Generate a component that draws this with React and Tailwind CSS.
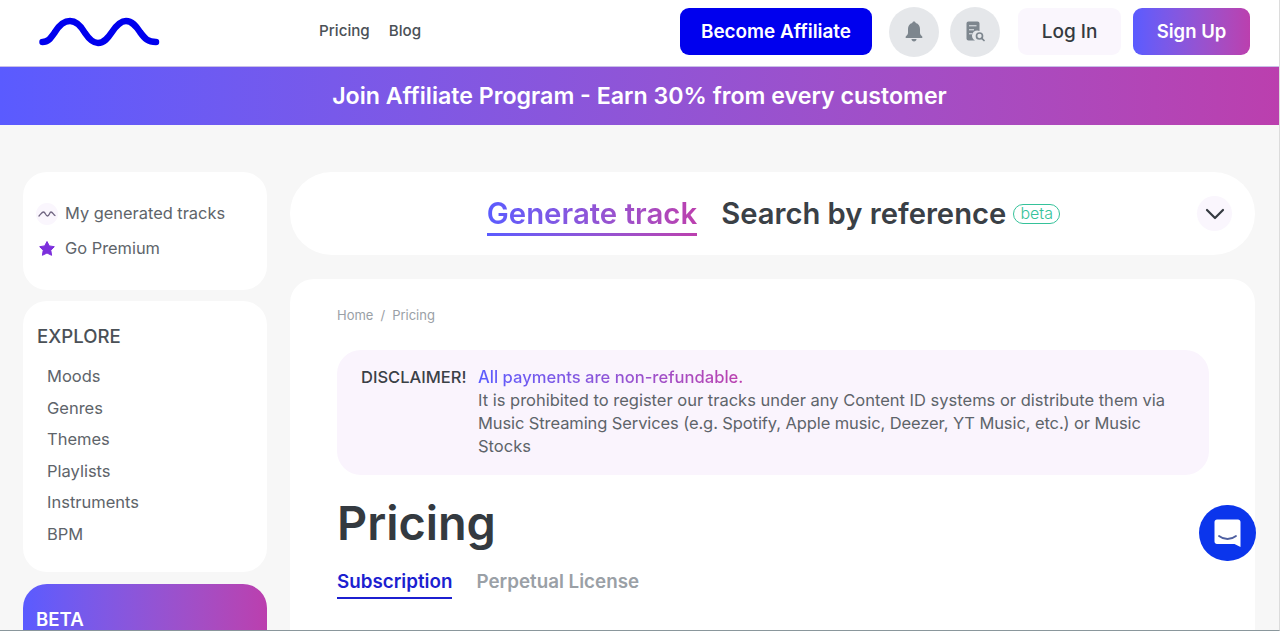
import React from "react";

const GRAD = "bg-gradient-to-r from-[#5a5bff] to-[#bb3fae]";

function Logo() {
  return (
    <svg width="122" height="32" viewBox="0 0 122 32" fill="none" className="block">
      <path d="M4.500 26 C 10 26 12 23 17 16 C 22 8 27 5 32 5 C 38 5 43 10 47 17 C 51 23 55 27 60 27 C 66 27 70 22 74 16 C 78 10 83 5 88 5 C 94 5 98 10 102 16 C 107 23 110 26 118 26" stroke="#0000ee" strokeWidth="6.500" strokeLinecap="round" />
    </svg>
  );
}

function Bell() {
  return (
    <svg width="18" height="21" viewBox="0 0 18 21" fill="#7d868e">
      <path d="M9 0.5c1 0 1.7.7 1.7 1.6 2.9.7 4.3 3 4.3 6v3.6c0 1.4.9 2.4 2.2 3.7.5.6.2 1.6-.7 1.6H1.5c-.9 0-1.2-1-.7-1.6C2.100 14.100 3 13.100 3 11.700V8.100c0-3 1.400-5.300 4.300-6C7.300 1.200 8 .5 9 .5z" />
      <path d="M6.500 18h5c0 1.500-1.100 2.500-2.500 2.500S6.500 19.500 6.500 18z" />
    </svg>
  );
}

function DocSearch() {
  return (
    <svg width="19" height="21" viewBox="0 0 19 21" fill="none">
      <path d="M2.500 0.500h9c1.100 0 2 .9 2 2v7.500a5 5 0 0 0-4.500 9.500H2.500c-1.100 0-2-.9-2-2v-15c0-1.100.9-2 2-2z" fill="#7d868e" />
      <rect x="3" y="4" width="7.500" height="1.400" fill="#c9ced3" />
      <rect x="3" y="8" width="5" height="1.400" fill="#c9ced3" />
      <rect x="3" y="12" width="3.500" height="1.400" fill="#c9ced3" />
      <circle cx="13.500" cy="15" r="3" stroke="#7d868e" strokeWidth="1.700" />
      <path d="M15.800 17.300L18 19.500" stroke="#7d868e" strokeWidth="1.700" strokeLinecap="round" />
    </svg>
  );
}

function Header() {
  return (
    <header className="h-[66px] bg-white flex items-center pl-[38px] pr-[29px] pb-[3px]">
      <div className="w-[281px] shrink-0"><Logo /></div>
      <nav className="flex gap-[19px] text-[15.200px] font-medium text-[#4b5157]">
        <span>Pricing</span>
        <span>Blog</span>
      </nav>
      <div className="ml-auto flex items-center">
        <button className="w-[192px] h-[47px] pt-[1px] rounded-[9px] bg-[#0000ee] text-white text-[18.900px] font-semibold">Become Affiliate</button>
        <div className="ml-[17px] w-[50px] h-[50px] rounded-full bg-[#e5e7ea] flex items-center justify-center"><Bell /></div>
        <div className="ml-[11px] w-[50px] h-[50px] rounded-full bg-[#e5e7ea] flex items-center justify-center"><DocSearch /></div>
        <button className="ml-[18px] w-[103px] h-[47px] pt-[1px] rounded-[9px] bg-[#faf6fd] text-[#343a40] text-[19px] font-medium">Log In</button>
        <button className={`ml-[12px] w-[117px] h-[47px] rounded-[9px] ${GRAD} text-white text-[18.500px] font-semibold`}>Sign Up</button>
      </div>
    </header>
  );
}

function Sidebar() {
  const items = ["Moods", "Genres", "Themes", "Playlists", "Instruments", "BPM"];
  return (
    <aside className="w-[244px] shrink-0 flex flex-col">
      <div className="h-[118px] bg-white rounded-[24px] pl-[13px] pt-[24px] text-[16.400px] text-[#5e646a]">
        <div className="flex items-center h-[35px]">
          <span className="w-[22px] h-[22px] rounded-full bg-[#faf6fd] flex items-center justify-center mr-[7px]">
            <svg width="18" height="8" viewBox="0 0 18 8" fill="none"><path d="M1 6 C3 4 4 2 5.500 2 C7.500 2 7.500 6 9.500 6 C11.500 6 11.500 2 13 2 C14.500 2 15.500 4.500 17 5.500" stroke="#6f6580" strokeWidth="1.300" strokeLinecap="round" /></svg>
          </span>
          My generated tracks
        </div>
        <div className="flex items-center h-[35px]">
          <span className="w-[22px] h-[22px] flex items-center justify-center mr-[7px]">
            <svg width="16" height="15" viewBox="0 0 16 15"><path d="M8 .5l2.300 4.400 5 .8-3.500 3.600.8 5L8 12l-4.600 2.300.8-5L.7 5.700l5-.8z" fill="#7c2fdc" stroke="#7c2fdc" strokeLinejoin="round" /></svg>
          </span>
          Go Premium
        </div>
      </div>
      <div className="mt-[11px] h-[271px] bg-white rounded-[24px] pl-[14px] pt-[22px]">
        <div className="text-[18.600px] font-medium text-[#4b5157] leading-[26px]">EXPLORE</div>
        <ul className="mt-[12px] pl-[10px] text-[16.500px] text-[#5e646a]">
          {items.map((t) => (
            <li key={t} className="h-[31.500px] leading-[31.500px]">{t}</li>
          ))}
        </ul>
      </div>
      <div className={`mt-[12px] h-[120px] rounded-[24px] ${GRAD} pl-[13px] pt-[22px] text-white text-[18.600px] font-semibold leading-[26px]`}>BETA</div>
    </aside>
  );
}

function TopCard() {
  return (
    <div className="h-[83px] bg-white rounded-[42px] flex items-center relative justify-center pl-[2px]">
      <div className="flex items-center">
        <span className="relative">
          <span className={`${GRAD} bg-clip-text text-transparent text-[29.400px] font-semibold leading-[40px] block`}>Generate track</span>
          <span className={`absolute left-0 right-0 bottom-[-2px] h-[3px] ${GRAD}`}></span>
        </span>
        <span className="ml-[24px] text-[29.200px] font-semibold text-[#3a4046] leading-[40px]">Search by reference</span>
        <span className="ml-[7px] mt-[1px] h-[20px] w-[47px] rounded-full border border-[#35c29a] text-[#35c29a] text-[16px] font-light leading-[17px] flex justify-center">beta</span>
      </div>
      <span className="absolute right-[23px] top-[24px] w-[35px] h-[35px] rounded-full bg-[#faf6fd] flex items-center justify-center">
        <svg width="20" height="12" viewBox="0 0 20 12" fill="none"><path d="M2 2l8 8 8-8" stroke="#343a40" strokeWidth="2.200" strokeLinecap="round" strokeLinejoin="round" /></svg>
      </span>
    </div>
  );
}

function Content() {
  return (
    <div className="mt-[24px] bg-white rounded-t-[24px] h-[360px] pl-[47px] pr-[46px] pt-[27px]">
      <div className="flex text-[13px] text-[#9aa0a6] leading-[18px]">
        <span>Home</span><span className="mx-[7px]">/</span><span>Pricing</span>
      </div>
      <div className="mt-[26px] h-[125px] rounded-[24px] bg-[#faf4fd] flex pl-[24px] pr-[40px] pt-[16px] text-[16.500px] leading-[23px]">
        <div className="w-[117px] shrink-0 font-medium text-[#3a4046]">DISCLAIMER!</div>
        <div className="text-[#5e646a]">
          <div className="font-medium text-[16.600px]"><span className={`${GRAD} bg-clip-text text-transparent`}>All payments are non-refundable.</span></div>
          It is prohibited to register our tracks under any Content ID systems or distribute them via <span className="tracking-[-0.1px]">Music Streaming Services (e.g. Spotify, Apple music, Deezer, YT Music, etc.) or Music</span> Stocks
        </div>
      </div>
      <h1 className="mt-[15px] text-[46.800px] leading-[66px] font-semibold text-[#343a40]">Pricing</h1>
      <div className="mt-[11px] flex text-[18.800px] font-semibold leading-[30px]">
        <span className="text-[#1c1fd0] border-b-2 border-[#1c1fd0] h-[32px]">Subscription</span>
        <span className="ml-[24px] text-[#9aa0a6] h-[32px]">Perpetual License</span>
      </div>
    </div>
  );
}

export default function App() {
  return (
    <div className="relative w-[1280px] h-[631px] overflow-hidden bg-[#f7f7f7] border-b border-r border-b-[#8a979c] border-r-[#dcdcdc]" style={{ fontFamily: 'Inter, "Liberation Sans", sans-serif' }}>
      <Header />
      <div className={`h-[59px] border-t border-[#c9bfe8] ${GRAD} flex items-center justify-center text-white text-[23.200px] font-semibold`}>
        Join Affiliate Program - Earn 30% from every customer
      </div>
      <div className="flex pl-[23px] pr-[24px] pt-[47px] gap-[23px]">
        <Sidebar />
        <main className="flex-1 min-w-0">
          <TopCard />
          <Content />
        </main>
      </div>
      <div className="absolute left-[1199px] top-[505px] w-[57px] h-[56px] rounded-full bg-[#0b35ec] flex items-center justify-center">
        <svg width="27" height="29" viewBox="0 0 27 29">
          <path d="M3 .5h21c1.400 0 2.500 1.100 2.500 2.500v25l-6-3H3c-1.400 0-2.500-1.100-2.500-2.500V3C.5 1.600 1.600.5 3 .5z" fill="#fff" />
          <path d="M5 17c5 4 12 4 17 0" stroke="#4e5fa0" strokeWidth="1.800" strokeLinecap="round" fill="none" />
        </svg>
      </div>
    </div>
  );
}
